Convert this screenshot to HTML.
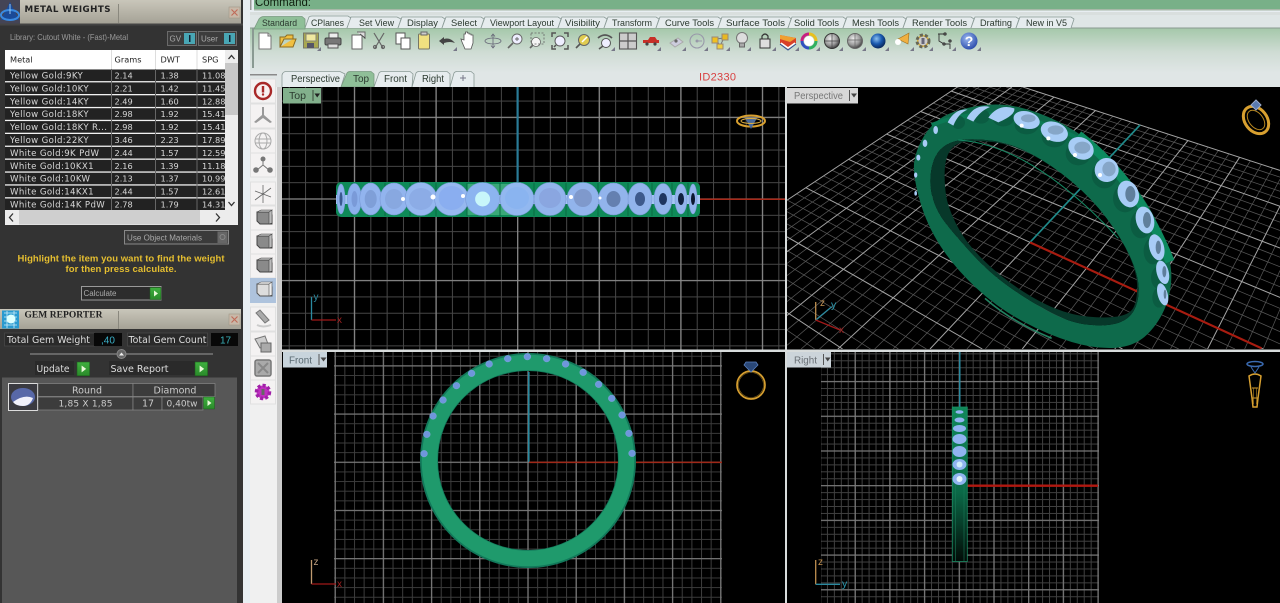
<!DOCTYPE html>
<html><head><meta charset="utf-8"><title>Metal Weights</title>
<style>
html,body{margin:0;padding:0;background:#333;width:1280px;height:603px;overflow:hidden}
svg{display:block;filter:blur(.35px)}
text{font-family:"Liberation Sans",sans-serif}
.d{font-family:"DejaVu Sans",sans-serif;font-size:8.2px;fill:#d8d8d8}
.n{font-family:"DejaVu Sans",sans-serif;font-size:8.6px;letter-spacing:.35px;fill:#d8d8d8}
.h{font-family:"DejaVu Sans",sans-serif;font-size:8.2px;fill:#222}
.t{font-size:9.6px;fill:#2c3a30}
.p{font-family:"DejaVu Sans",sans-serif;font-size:9px;fill:#ddd}
</style></head><body>
<svg width="1280" height="603" viewBox="0 0 1280 603" xmlns="http://www.w3.org/2000/svg">
<defs>
<linearGradient id="tb" x1="0" y1="0" x2="0" y2="1"><stop offset="0" stop-color="#a3c7a8"/><stop offset=".55" stop-color="#cfdcd4"/><stop offset="1" stop-color="#e0e6e6"/></linearGradient>
<linearGradient id="hd" x1="0" y1="0" x2="0" y2="1"><stop offset="0" stop-color="#c9c6ba"/><stop offset="1" stop-color="#a5a296"/></linearGradient>
<linearGradient id="gb" x1="0" y1="0" x2="0" y2="1"><stop offset="0" stop-color="#3fb03f"/><stop offset="1" stop-color="#2a8a2a"/></linearGradient>
<linearGradient id="rg" x1="0" y1="0" x2="0" y2="1"><stop offset="0" stop-color="#0f8a5a"/><stop offset=".55" stop-color="#0b6a48"/><stop offset="1" stop-color="#020a06"/></linearGradient>
<radialGradient id="sph" cx=".4" cy=".35" r=".7"><stop offset="0" stop-color="#eee"/><stop offset=".6" stop-color="#999"/><stop offset="1" stop-color="#333"/></radialGradient>
<radialGradient id="bsph" cx=".4" cy=".35" r=".7"><stop offset="0" stop-color="#8ac0f0"/><stop offset=".5" stop-color="#1a5ab0"/><stop offset="1" stop-color="#062050"/></radialGradient>
<radialGradient id="hlp" cx=".4" cy=".35" r=".7"><stop offset="0" stop-color="#9ab8f0"/><stop offset="1" stop-color="#2848a8"/></radialGradient>
<pattern id="tm" patternUnits="userSpaceOnUse" x="517.2" y="198.5" width="16.32" height="16.32"><path d="M.5 0V16.32M0 .5H16.32" stroke="#474747" fill="none"/></pattern>
<pattern id="tM" patternUnits="userSpaceOnUse" x="517" y="198.3" width="81.6" height="81.6"><path d="M.7 0V81.6M0 .7H81.6" stroke="#8c8c8c" stroke-width="1.2" fill="none"/></pattern>
<pattern id="fm" patternUnits="userSpaceOnUse" x="527.5" y="461.8" width="9.64" height="9.64"><path d="M.5 0V9.64M0 .5H9.64" stroke="#3c3c3c" fill="none"/></pattern>
<pattern id="fM" patternUnits="userSpaceOnUse" x="527.3" y="461.6" width="48.2" height="48.2"><path d="M.7 0V48.2M0 .7H48.2" stroke="#7c7c7c" stroke-width="1.2" fill="none"/></pattern>
<pattern id="rm" patternUnits="userSpaceOnUse" x="958.8" y="485.2" width="6.94" height="6.94"><path d="M.5 0V6.94M0 .5H6.94" stroke="#404040" fill="none"/></pattern>
<pattern id="rM" patternUnits="userSpaceOnUse" x="958.6" y="485" width="34.7" height="34.7"><path d="M.7 0V34.7M0 .7H34.7" stroke="#7c7c7c" stroke-width="1.2" fill="none"/></pattern>
<clipPath id="cpP"><rect x="787" y="87" width="493" height="262"/></clipPath>
<clipPath id="cpS"><rect x="0" y="60" width="225" height="155"/></clipPath>
<g id="ga"><rect x="0" y="0" width="11" height="12" fill="url(#gb)" stroke="#1c5c1c" stroke-width=".5"/><path d="M4 3L8 6L4 9Z" fill="#e8f8d8"/></g>
<g id="cb"><path d="M-6-6L6-6L9-3L9 6L-3 6L-6 3Z" fill="#8a8a8a" stroke="#444"/><path d="M-6-6L-2-8L9-8L6-6ZM6-6L9-8L9 5L6 6Z" fill="#bbb" stroke="#444" stroke-width=".6"/></g>
<path id="cor" d="M0 4L4 4L4 0Z" fill="#778"/>
</defs>

<!-- base right side -->
<rect x="243" y="0" width="1037" height="603" fill="#e8eef2"/>
<rect x="250" y="76" width="27" height="527" fill="#f0f0f0"/>
<rect x="277" y="76" width="5" height="527" fill="#ccc"/>

<!-- command bar -->
<rect x="254" y="0" width="1026" height="9" fill="#78b088"/>
<rect x="254" y="9" width="1026" height="1.5" fill="#a8b8a8"/>
<rect x="250" y="0" width="1.5" height="10" fill="#999"/>
<text x="255" y="6" font-size="11.5" fill="#10200f" textLength="56" lengthAdjust="spacingAndGlyphs">Command:</text>
<rect x="250" y="12" width="1030" height="3" fill="#d9dfde"/>

<!-- toolbar -->
<rect x="250" y="27" width="1030" height="46" fill="url(#tb)"/>
<rect x="250" y="73" width="1030" height="14" fill="#e0e6e6"/>
<rect x="252" y="15" width="2" height="53" fill="#8a9a92"/>
<rect x="250" y="15" width="1030" height="13" fill="#dfe6e6"/>
<rect x="250" y="27.5" width="1030" height="1" fill="#8a9a90"/>

<!-- tabs -->
<g fill="#e6ecee" stroke="#8a9a96" stroke-width=".8">
<path d="M305 28L309 17Q310 16 312 16H348L351 18L347 28"/>
<path d="M347 28L351 17H397L401 19L398 28"/>
<path d="M398 28L402 17H442L445 19L442 28"/>
<path d="M442 28L446 17H481L484 19L481 28"/>
<path d="M481 28L485 17H558L561 19L558 28"/>
<path d="M558 28L562 17H604L607 19L604 28"/>
<path d="M604 28L608 17H656L659 19L656 28"/>
<path d="M656 28L660 17H718L721 19L718 28"/>
<path d="M718 28L722 17H789L791 19L788 28"/>
<path d="M788 28L792 17H843L846 19L843 28"/>
<path d="M843 28L847 17H903L906 19L903 28"/>
<path d="M903 28L907 17H971L974 19L971 28"/>
<path d="M971 28L975 17H1016L1019 19L1016 28"/>
<path d="M1016 28L1020 17H1071L1074 19L1071 28"/>
</g>
<path d="M254 29L259 19Q261 16.5 264 16.5H302L305 19V29Z" fill="#8fbf98" stroke="#7a9a80" stroke-width=".8"/>
<text class="t" x="262" y="26" textLength="35" lengthAdjust="spacingAndGlyphs">Standard</text>
<text class="t" x="311" y="26" textLength="33" lengthAdjust="spacingAndGlyphs">CPlanes</text>
<text class="t" x="359" y="26" textLength="35" lengthAdjust="spacingAndGlyphs">Set View</text>
<text class="t" x="407" y="26" textLength="31" lengthAdjust="spacingAndGlyphs">Display</text>
<text class="t" x="451" y="26" textLength="26" lengthAdjust="spacingAndGlyphs">Select</text>
<text class="t" x="490" y="26" textLength="64" lengthAdjust="spacingAndGlyphs">Viewport Layout</text>
<text class="t" x="565" y="26" textLength="35" lengthAdjust="spacingAndGlyphs">Visibility</text>
<text class="t" x="612" y="26" textLength="40" lengthAdjust="spacingAndGlyphs">Transform</text>
<text class="t" x="665" y="26" textLength="49" lengthAdjust="spacingAndGlyphs">Curve Tools</text>
<text class="t" x="726" y="26" textLength="59" lengthAdjust="spacingAndGlyphs">Surface Tools</text>
<text class="t" x="794" y="26" textLength="45" lengthAdjust="spacingAndGlyphs">Solid Tools</text>
<text class="t" x="852" y="26" textLength="47" lengthAdjust="spacingAndGlyphs">Mesh Tools</text>
<text class="t" x="912" y="26" textLength="55" lengthAdjust="spacingAndGlyphs">Render Tools</text>
<text class="t" x="980" y="26" textLength="32" lengthAdjust="spacingAndGlyphs">Drafting</text>
<text class="t" x="1026" y="26" textLength="41" lengthAdjust="spacingAndGlyphs">New in V5</text>

<!-- toolbar icons -->
<g transform="translate(265,41)"><path d="M-6-8H3L6-5V8H-6Z" fill="#fff" stroke="#777"/><path d="M3-8V-5H6" fill="#ddd" stroke="#777"/></g>
<g transform="translate(288,41)"><path d="M-8 6V-4H-3L-1-6H5V-2H-4L-8 6H5L8-2H5" fill="#f0c040" stroke="#8a6a20"/></g>
<g transform="translate(311,41)"><rect x="-7.5" y="-8" width="15" height="15" fill="#a8a850" stroke="#776"/><rect x="-5" y="-7" width="10" height="7" fill="#f0e8a0" stroke="#887"/><rect x="-4" y="2" width="7" height="5" fill="#556"/><use href="#cor" x="6" y="6"/></g>
<g transform="translate(333,41)"><rect x="-4" y="-8" width="9" height="5" fill="#eee" stroke="#555"/><rect x="-8" y="-3" width="16" height="7" rx="1.5" fill="#777" stroke="#444"/><rect x="-5" y="3" width="10" height="4" fill="#ddd" stroke="#555"/></g>
<g transform="translate(358,41)"><path d="M-6-6H4V8H-6Z" fill="#fff" stroke="#666"/><path d="M-1-9H7V-2" fill="#ddd" stroke="#666"/><path d="M2-7L7-3" stroke="#444"/></g>
<g transform="translate(379,41)" stroke="#666" stroke-width="1.2" fill="none"><path d="M-5-8L4 7M5-8L-4 7"/><circle cx="-4" cy="6" r="1.5"/><circle cx="4" cy="6" r="1.5"/></g>
<g transform="translate(402,41)"><rect x="-6" y="-8" width="9" height="11" fill="#fff" stroke="#555"/><rect x="-1" y="-3" width="9" height="11" fill="#fff" stroke="#555"/></g>
<g transform="translate(424,41)"><rect x="-5.5" y="-7" width="11" height="15" rx="1" fill="#f0e080" stroke="#776"/><rect x="-3" y="-9" width="6" height="3" fill="#ccc" stroke="#666"/></g>
<g transform="translate(447,41)"><path d="M-8 0L-3-4V-2Q3-4 8 2Q3 0-3 2V4Z" fill="#444"/><use href="#cor" x="6" y="6"/></g>
<g transform="translate(468,41)"><path d="M-6 1L-7-2L-4-1V-7H-2.500V-9H-.5V-8H1V-7H3V-6H5V2L3 8H-3Z" fill="#fff" stroke="#555" stroke-width=".8"/></g>
<g transform="translate(493,41)" fill="none" stroke="#667" stroke-width=".8"><ellipse rx="8" ry="3"/><path d="M0-7V7M-2-4.500L0-7L2-4.500M-2 4.500L0 7L2 4.500"/></g>
<g transform="translate(515,41)" fill="none" stroke="#666" stroke-width=".9"><circle cx="2" cy="-2" r="5" fill="#eef"/><path d="M-2 2L-7 7" stroke-width="1.600"/><path d="M0-2H4M2-4V0"/></g>
<g transform="translate(537,41)" fill="none" stroke="#666" stroke-width=".8"><circle cx="-1" cy="1" r="4.500" fill="#f4f4f4"/><path d="M-4 4L-7 7" stroke-width="1.600"/><rect x="-6" y="-8" width="13" height="11" stroke-dasharray="2 1.500"/></g>
<g transform="translate(560,41)" fill="none" stroke="#555" stroke-width=".9"><circle r="5" fill="#eef"/><path d="M-4 4L-6 6" stroke-width="1.500"/><path d="M-8-4V-8H-4M4-8H8V-4M8 4V8H4M-4 8H-8V4" stroke-width="1.500"/></g>
<g transform="translate(583,41)"><circle cx="1" cy="-1" r="5.500" fill="#e0cc50" stroke="#666"/><path d="M-3 3L-7 7" stroke="#555" stroke-width="1.600"/><path d="M-1 1L4-4" stroke="#fff" stroke-width="1.500"/></g>
<g transform="translate(605,41)" fill="none" stroke="#555" stroke-width="1"><circle cx="1" cy="2" r="4.500" fill="#eef"/><path d="M-2 5L-6 8" stroke-width="1.600"/><path d="M-7-3Q0-9 7-3" stroke-width="1.800"/><use href="#cor" x="6" y="6" stroke="none"/></g>
<g transform="translate(628,41)"><rect x="-8.500" y="-8" width="17" height="16" fill="#ccc" stroke="#555" stroke-width="1.100"/><path d="M0-8V8M-8.500 0H8.500" stroke="#555" stroke-width="1.200"/></g>
<g transform="translate(651,41)"><path d="M-8 2V-1H-3L-1-4H4L6-1H8V2Z" fill="#c83028"/><circle cx="-4" cy="3" r="1.600" fill="#444"/><circle cx="4" cy="3" r="1.600" fill="#444"/><use href="#cor" x="6" y="6"/></g>
<g transform="translate(676,41)"><path d="M-6 2L2-3L7 1L-1 6Z" fill="#ccd" stroke="#aaa"/><circle r="1.600" fill="#666"/><use href="#cor" x="6" y="6"/></g>
<g transform="translate(697,41)" fill="none" stroke="#99a"><circle r="7" stroke-width="1.100"/><circle r="1" fill="#889"/><path d="M0 0H5"/><use href="#cor" x="7" y="6" stroke="none" fill="#778"/></g>
<g transform="translate(720,41)"><path d="M-4-2L4-3L0 5Z" fill="none" stroke="#777"/><rect x="-8" y="-4" width="6" height="6" fill="#f0c020" stroke="#987"/><rect x="2" y="-7" width="6" height="6" fill="#e8b820" stroke="#987"/><rect x="-3" y="3" width="6" height="5" fill="#f0d040" stroke="#987"/><use href="#cor" x="6" y="6"/></g>
<g transform="translate(742,41)"><circle cy="-3" r="5.500" fill="#ddd" stroke="#777"/><path d="M-2.500 2H2.500V6H-2.500Z" fill="#aaa" stroke="#666"/><use href="#cor" x="5" y="6"/></g>
<g transform="translate(765,41)"><rect x="-5" y="-2" width="10" height="9" fill="#ddd" stroke="#333"/><path d="M-3-2V-5Q0-9 3-5V-2" fill="none" stroke="#333" stroke-width="1.200"/><use href="#cor" x="7" y="6"/></g>
<g transform="translate(788,41)"><path d="M-8-6L8-3V2L0 8L-8 2Z" fill="#d84028"/><path d="M-8-6L8-3L2 1L-8-2Z" fill="#f0a030"/><path d="M-7 2L0 7L7 2" fill="none" stroke="#fff" stroke-width="1.500"/><path d="M-8 3L0 9L8 3" fill="none" stroke="#2a4a90"/><use href="#cor" x="7" y="6"/></g>
<g transform="translate(809,41)"><circle r="5" fill="#fff" stroke="none"/><path d="M0-7A7 7 0 0 1 7 0" stroke="#e8c020" stroke-width="3" fill="none"/><path d="M7 0A7 7 0 0 1 0 7" stroke="#30b060" stroke-width="3" fill="none"/><path d="M0 7A7 7 0 0 1-7 0" stroke="#3050c0" stroke-width="3" fill="none"/><path d="M-7 0A7 7 0 0 1 0-7" stroke="#c82080" stroke-width="3" fill="none"/><use href="#cor" x="7" y="6"/></g>
<g transform="translate(832,41)"><circle r="7.500" fill="url(#sph)" stroke="#333"/><path d="M0-7V7M-7 0H7" stroke="#444" stroke-width=".7"/><use href="#cor" x="7" y="6"/></g>
<g transform="translate(855,41)"><circle r="7.500" fill="url(#sph)" stroke="#666"/><path d="M0-7V7M-7-1H7" stroke="#666" stroke-width=".7"/><use href="#cor" x="7" y="6"/></g>
<g transform="translate(878,41)"><circle r="7.500" fill="url(#bsph)"/><use href="#cor" x="7" y="6"/></g>
<g transform="translate(903,41)"><path d="M-5-2L6-8L5 3Z" fill="#f0b040" stroke="#a07020" stroke-width=".6"/><circle cx="-5" cy="1" r="3" fill="#fff"/><use href="#cor" x="7" y="6"/></g>
<g transform="translate(923,41)"><circle r="6" fill="#d8b040" stroke="#665" stroke-width="3" stroke-dasharray="3 2"/><circle r="4.500" fill="#ccc"/><rect x="-1.500" y="-3" width="3" height="6" fill="#667"/><use href="#cor" x="6" y="6"/></g>
<g transform="translate(946,41)" fill="none" stroke="#333" stroke-width=".9"><path d="M-8-7H-1M-7-7V0L-2 3H4V8"/><circle cx="-1" cy="-7" r="1.200" fill="#666"/><circle cx="-2" cy="3" r="1.200" fill="#666"/><circle cx="4" cy="0" r="1.200" fill="#666"/><use href="#cor" x="6" y="6" stroke="none"/></g>
<g transform="translate(969,41)"><circle r="8.500" fill="url(#hlp)"/><text x="0" y="5" text-anchor="middle" font-size="14" font-weight="bold" style="fill:#fff">?</text><use href="#cor" x="8" y="6"/></g>

<!-- viewport tabs -->
<g stroke="#8a9a96" stroke-width=".8" fill="#e6ecee">
<path d="M282 87V75Q283 71.500 286 71.500H340L345 74L341 87"/>
<path d="M374 87L379 73Q380 71.500 382 71.500H410L413 74L412 87"/>
<path d="M412 87L416 73Q417 71.500 419 71.500H447L450 74V87"/>
<path d="M450 87L454 73Q455 71.500 457 71.500H471L474 74V87"/>
</g>
<path d="M341 87L347 73Q348 71.500 350 71.500H371L374 74V87Z" fill="#8fbf98" stroke="#7a9a80" stroke-width=".8"/>
<text class="t" x="291" y="82" textLength="49" lengthAdjust="spacingAndGlyphs" style="font-size:10.5px">Perspective</text>
<text class="t" x="353" y="82" textLength="16" lengthAdjust="spacingAndGlyphs" style="font-size:10.5px">Top</text>
<text class="t" x="384" y="82" textLength="23" lengthAdjust="spacingAndGlyphs" style="font-size:10.5px">Front</text>
<text class="t" x="422" y="82" textLength="22" lengthAdjust="spacingAndGlyphs" style="font-size:10.5px">Right</text>
<path d="M463 75V81M460 78H466" stroke="#778" stroke-width="1"/>
<text x="699" y="80.500" font-size="11" fill="#d84040" textLength="37">ID2330</text>

<!-- left icon bar -->
<rect x="250" y="74" width="27" height="1.500" fill="#8a8a8a"/>
<g fill="#f4f2f2" stroke="#e0e0e0">
<rect x="250.500" y="79" width="25" height="24"/><rect x="250.500" y="104" width="25" height="24"/><rect x="250.500" y="129" width="25" height="24"/><rect x="250.500" y="153" width="25" height="24"/>
<rect x="250.500" y="182" width="25" height="23"/><rect x="250.500" y="206" width="25" height="24"/><rect x="250.500" y="230" width="25" height="24"/><rect x="250.500" y="254" width="25" height="24"/>
<rect x="250.500" y="307" width="25" height="24"/><rect x="250.500" y="332" width="25" height="24"/><rect x="250.500" y="356" width="25" height="24"/><rect x="250.500" y="380" width="25" height="24"/>
</g>
<rect x="250" y="278" width="26" height="25" fill="#aec3dd"/>
<g transform="translate(263,91)"><circle r="8" fill="#f8f0f0" stroke="#a82828" stroke-width="2.400"/><rect x="-1.200" y="-5" width="2.400" height="6.500" fill="#a82828"/><circle cy="3.500" r="1.200" fill="#a82828"/></g>
<g transform="translate(263,116)" fill="#999"><path d="M-1-9H1V-1L9 6L7 7L0 2L-7 7L-9 6L-1-1Z"/></g>
<g transform="translate(263,141)" fill="none" stroke="#aaa" stroke-width="1"><circle r="8"/><ellipse rx="4" ry="8"/><path d="M-8-2H8M-8 2H8"/></g>
<g transform="translate(263,165)" fill="#777"><circle cy="-6" r="2.500"/><circle cx="-7" cy="5" r="2.800"/><circle cx="7" cy="5" r="2.800"/><path d="M0-5V0L-6 5M0 0L6 5" stroke="#777" stroke-width="1" fill="none"/></g>
<g transform="translate(263,194)" stroke="#666" fill="none"><path d="M-8 6L8-6M0-9V9M-8-3L8 3" stroke-width=".8"/></g>
<use href="#cb" transform="translate(263,218)"/>
<use href="#cb" transform="translate(263,242)"/>
<use href="#cb" transform="translate(263,266)"/>
<g transform="translate(263,290)"><path d="M-6-6L6-6L9-3L9 6L-3 6L-6 3Z" fill="#ddd" stroke="#555"/><path d="M-6-6L-2-8L9-8L6-6ZM6-6L9-8L9 5L6 6Z" fill="#eee" stroke="#555" stroke-width=".6"/></g>
<g transform="translate(263,319)"><path d="M-7-6L-3-9L6 1L2 4Z" fill="#aaa" stroke="#777"/><path d="M-6 6Q0 9 8 6" stroke="#ccc" stroke-width="2" fill="none"/></g>
<g transform="translate(263,344)"><path d="M-8-5L2-8L5 0L-3 4Z" fill="#ccc" stroke="#777"/><rect x="-2" y="-1" width="10" height="9" fill="#aaa" stroke="#666"/></g>
<g transform="translate(263,368)"><rect x="-8" y="-8" width="16" height="16" rx="2" fill="#aaa" stroke="#777" stroke-width="1.500"/><path d="M-5-5L5 5M5-5L-5 5" stroke="#888" stroke-width="2"/></g>
<g transform="translate(263,392)"><circle r="6.500" fill="#c030c0" stroke="#a020a8" stroke-width="3.500" stroke-dasharray="3 2"/><rect x="-1.500" y="-3" width="3" height="6" fill="#666"/></g>

<!-- viewports -->
<rect x="282" y="87" width="998" height="516" fill="#000"/>
<rect x="785" y="87" width="2" height="516" fill="#d8dcdc"/>
<rect x="282" y="349.500" width="998" height="2.500" fill="#d8dcdc"/>

<!-- TOP -->
<rect x="282" y="87" width="503" height="262.500" fill="url(#tm)"/>
<rect x="282" y="87" width="503" height="262.500" fill="url(#tM)"/>
<rect x="516.500" y="87" width="2.200" height="96" fill="#2a7c98"/>
<rect x="700" y="198.500" width="85" height="1.500" fill="#a82818"/>
<rect x="336" y="182" width="364" height="35" rx="5" fill="#0e8a58"/>
<rect x="467" y="184" width="44" height="31" fill="#3aa878"/>
<g stroke="#0a6a42" stroke-width="1"><path d="M352 183V216M368 183V216M385 183V216M410 183V216M436 183V216M467 183V216M500 183V216M534 183V216M566 183V216M598 183V216M628 183V216M652 183V216M672 183V216M688 183V216"/></g>
<rect x="336" y="195" width="364" height="9" fill="#a4c6f4"/>
<g stroke="#7a9ad6" stroke-width=".6">
<ellipse cx="341" cy="199" rx="4" ry="15" fill="#8cb0ec"/><ellipse cx="341" cy="199" rx="1.500" ry="7" fill="#3a5a90" stroke="none"/>
<ellipse cx="354.500" cy="199" rx="7" ry="15.500" fill="#8cb0ec"/><ellipse cx="354.500" cy="199" rx="3" ry="8" fill="#7a9ad8" stroke="none"/>
<ellipse cx="370.700" cy="199" rx="11" ry="16" fill="#92b4ee"/><ellipse cx="370.700" cy="199" rx="6" ry="9" fill="#7f9fd8" stroke="none"/>
<ellipse cx="394" cy="199" rx="14" ry="16" fill="#92b4ee"/><ellipse cx="394" cy="199" rx="9" ry="10" fill="#88a8e0" stroke="none"/>
<ellipse cx="421" cy="199" rx="16" ry="16.500" fill="#96b8f0"/><ellipse cx="421" cy="199" rx="12" ry="11" fill="#8cace6" stroke="none"/>
<ellipse cx="451.600" cy="199" rx="17" ry="16.500" fill="#96b8f0"/><ellipse cx="451.600" cy="198" rx="13" ry="12" fill="#8aaef0" stroke="none"/>
<ellipse cx="482.600" cy="199" rx="17" ry="16.500" fill="#8cb4f0"/><ellipse cx="482.600" cy="199" rx="7.500" ry="7.500" fill="#c8f6fa" stroke="none"/>
<ellipse cx="517" cy="199" rx="17" ry="16.500" fill="#92b8f0"/><ellipse cx="517" cy="198" rx="12" ry="11" fill="#8ab4f0" stroke="none"/>
<ellipse cx="550" cy="199" rx="16" ry="16.500" fill="#92b4ec"/><ellipse cx="550" cy="198" rx="11" ry="10" fill="#8aa6e0" stroke="none"/>
<ellipse cx="583" cy="199" rx="16" ry="16.500" fill="#92b4ec"/><ellipse cx="583" cy="198" rx="9" ry="9" fill="#7f99cc" stroke="none"/>
<ellipse cx="613.500" cy="199" rx="15" ry="16" fill="#92b4ec"/><ellipse cx="613.500" cy="199" rx="7" ry="8" fill="#6480b0" stroke="none"/>
<ellipse cx="640" cy="199" rx="12" ry="16" fill="#92b4ec"/><ellipse cx="640" cy="199" rx="5" ry="7" fill="#3e5a8c" stroke="none"/>
<ellipse cx="663" cy="199" rx="9" ry="15.500" fill="#92b4ec"/><ellipse cx="663" cy="199" rx="4" ry="6" fill="#1f3560" stroke="none"/>
<ellipse cx="681" cy="199" rx="6" ry="15" fill="#92b4ec"/><ellipse cx="681" cy="199" rx="3" ry="6" fill="#102040" stroke="none"/>
<ellipse cx="693" cy="199" rx="4" ry="15" fill="#92b4ec"/><ellipse cx="693" cy="199" rx="2" ry="6" fill="#0c1830" stroke="none"/>
</g>
<g fill="#fff"><circle cx="403" cy="199" r="2"/><circle cx="433" cy="197" r="2.500"/><circle cx="463" cy="196" r="2"/><circle cx="571" cy="197" r="2"/><circle cx="600" cy="198" r="1.500"/></g>
<rect x="283" y="88" width="38" height="15.500" fill="#82b08c"/>
<rect x="312.500" y="90" width="1" height="11" fill="#3a4a3a"/><path d="M314.500 93.500H320L317.200 97.500Z" fill="#222"/>
<text x="289" y="99" font-size="10.500" fill="#2a3a2e" textLength="17" lengthAdjust="spacingAndGlyphs">Top</text>
<g fill="none" stroke-width="1.300"><path d="M311.500 320V297" stroke="#2a8aa0"/><path d="M311.500 320H336" stroke="#a01818"/></g>
<text x="313.500" y="300" font-size="10" fill="#2a8aa0">y</text><text x="337" y="323" font-size="10" fill="#a02020">x</text>
<g transform="translate(751,121)"><ellipse rx="14" ry="5.500" fill="none" stroke="#d8a030" stroke-width="2"/><path d="M-6-3H6L0 8Z" fill="#4a6a9a"/><ellipse rx="10" ry="2.500" fill="none" stroke="#e0b040"/></g>

<!-- PERSPECTIVE -->
<g clip-path="url(#cpP)"><g transform="translate(785,85) scale(.33333)">
<g id="pg"></g>
<path d="M735 472L1065 120" stroke="#1f8a8a" stroke-width="5"/>
<path d="M735 472L1430 790" stroke="#a81c10" stroke-width="6.500"/>
<path id="rOuter" fill="#0e6a4b" fill-rule="evenodd"/>
<path id="rWall" fill="#07382a" fill-rule="evenodd"/>
<path d="M600 640Q680 710 800 760" stroke="#2aa078" stroke-width="5" fill="none" opacity=".8"/>
<path d="M440 120Q640 40 880 160" stroke="#0b7a55" stroke-width="12" fill="none"/>
<path d="M880 150Q1060 290 1155 530" stroke="#0d8a5f" stroke-width="28" fill="none"/>
<path d="M520 165Q740 180 1000 460" stroke="#158a64" stroke-width="3" fill="none"/>
<g fill="#0b5c42"><ellipse cx="520" cy="112" rx="20" ry="20"/><ellipse cx="588" cy="94" rx="26" ry="22"/><ellipse cx="655" cy="100" rx="32" ry="24"/><ellipse cx="725" cy="120" rx="36" ry="28"/><ellipse cx="808" cy="155" rx="38" ry="32"/><ellipse cx="880" cy="205" rx="38" ry="36"/><ellipse cx="958" cy="270" rx="38" ry="40"/><ellipse cx="1020" cy="340" rx="36" ry="42"/><ellipse cx="1068" cy="418" rx="32" ry="42"/><ellipse cx="1103" cy="498" rx="27" ry="40"/><ellipse cx="1122" cy="578" rx="24" ry="34"/><ellipse cx="1122" cy="638" rx="20" ry="30"/></g>
<g fill="#a8ccf6">
<ellipse cx="392" cy="325" rx="4" ry="7"/><ellipse cx="392" cy="270" rx="5" ry="8"/><ellipse cx="400" cy="218" rx="6" ry="9"/><ellipse cx="420" cy="175" rx="7" ry="11"/><ellipse cx="452" cy="135" rx="7" ry="12"/>
<path d="M488 112Q510 70 548 74Q520 85 505 122Z"/><path d="M545 100Q570 55 615 66Q585 78 565 110Z"/><path d="M610 98Q640 55 688 70Q692 90 640 112Z"/>
<ellipse cx="725" cy="105" rx="40" ry="26" transform="rotate(15 725 105)"/><ellipse cx="808" cy="140" rx="42" ry="29" transform="rotate(20 808 140)"/><ellipse cx="888" cy="190" rx="40" ry="32" transform="rotate(30 888 190)"/><ellipse cx="965" cy="255" rx="36" ry="36" transform="rotate(40 965 255)"/><ellipse cx="1030" cy="327" rx="31" ry="41" transform="rotate(-20 1030 327)"/><ellipse cx="1080" cy="405" rx="27" ry="41" transform="rotate(-15 1080 405)"/><ellipse cx="1115" cy="487" rx="22" ry="40" transform="rotate(-15 1115 487)"/><ellipse cx="1133" cy="562" rx="18" ry="36" transform="rotate(-15 1133 562)"/><ellipse cx="1133" cy="628" rx="15" ry="34" transform="rotate(-15 1133 628)"/>
</g>
<g fill="#86a6c8"><ellipse cx="730" cy="100" rx="22" ry="12"/><ellipse cx="812" cy="135" rx="24" ry="14"/><ellipse cx="892" cy="188" rx="24" ry="18"/><ellipse cx="972" cy="252" rx="20" ry="22"/></g>
<g fill="#607f9c"><ellipse cx="1036" cy="327" rx="15" ry="24"/><ellipse cx="1086" cy="405" rx="12" ry="24"/><ellipse cx="1120" cy="487" rx="8" ry="20"/><ellipse cx="1138" cy="560" rx="6" ry="17"/><ellipse cx="1140" cy="628" rx="4" ry="14"/></g>
<g fill="#fff"><circle cx="710" cy="122" r="6"/><circle cx="790" cy="160" r="6"/><circle cx="870" cy="210" r="6"/><circle cx="945" cy="270" r="6"/></g>
</g></g>
<rect x="787" y="88" width="71" height="15.500" fill="#d8d8d8"/>
<rect x="849" y="90" width="1" height="11" fill="#555"/><path d="M851 93.500H857L854 97.500Z" fill="#444"/>
<text x="794" y="99" font-size="10.500" fill="#777" textLength="49" lengthAdjust="spacingAndGlyphs">Perspective</text>
<g fill="none" stroke-width="1.300"><path d="M815.700 320V302" stroke="#c09050"/><path d="M815.700 320L831.700 306.700" stroke="#2a8aa0"/><path d="M815.700 320L840 330" stroke="#a01818"/></g>
<text x="820" y="306" font-size="10" fill="#c09050">z</text><text x="831" y="308" font-size="10.500" fill="#2a9ab0">y</text><text x="839" y="333" font-size="10" fill="#a02020">x</text>
<g transform="translate(1256,120)"><ellipse rx="15" ry="11" transform="rotate(52)" fill="none" stroke="#d8a030" stroke-width="3"/><ellipse rx="11" ry="7" transform="rotate(52)" fill="none" stroke="#b88820"/><path d="M-5-15L0-20L5-15L0-10Z" fill="#5a7ab0" stroke="#9ac"/></g>

<!-- FRONT -->
<rect x="334" y="352" width="388" height="251" fill="url(#fm)"/>
<rect x="334" y="352" width="388" height="251" fill="url(#fM)"/>
<rect x="528" y="372" width="1.600" height="90" fill="#2a8aa0"/>
<rect x="529" y="461.600" width="193" height="1.500" fill="#a02818"/>
<ellipse cx="528" cy="460.500" rx="99" ry="98.500" fill="none" stroke="#12785a" stroke-width="18"/>
<ellipse cx="528" cy="460.500" rx="98.500" ry="98" fill="none" stroke="#1f9a6c" stroke-width="15.500"/>
<g transform="translate(245,345) scale(.34436,.33333)"><g fill="#6f96dc" stroke="#8eaee8" stroke-width="1">
<circle cx="520" cy="326" r="10"/><circle cx="528" cy="268" r="10"/><circle cx="546" cy="213" r="10"/><circle cx="575" cy="165" r="10"/><circle cx="614" cy="122" r="10"/><circle cx="658" cy="85" r="10"/><circle cx="709" cy="57" r="10"/><circle cx="763" cy="41" r="10"/><circle cx="820" cy="35" r="10"/><circle cx="876" cy="41" r="10"/><circle cx="931" cy="57" r="10"/><circle cx="982" cy="82" r="10"/><circle cx="1027" cy="118" r="10"/><circle cx="1065" cy="160" r="10"/><circle cx="1095" cy="210" r="10"/><circle cx="1115" cy="265" r="10"/><circle cx="1124" cy="325" r="10"/></g></g>
<rect x="283" y="352" width="44" height="15.500" fill="#c8d4dc"/>
<rect x="318.500" y="354" width="1" height="11" fill="#555"/><path d="M320.500 357.500H326.500L323.500 361.500Z" fill="#444"/>
<text x="289" y="363.500" font-size="10.500" fill="#5a6a72" textLength="23" lengthAdjust="spacingAndGlyphs">Front</text>
<g fill="none" stroke-width="1.300"><path d="M311.500 584V560" stroke="#c09a70"/><path d="M311.500 584H336" stroke="#a01818"/></g>
<text x="313.500" y="565" font-size="10" fill="#c0a080">z</text><text x="337" y="587" font-size="10" fill="#a02020">x</text>
<g transform="translate(751,385)"><circle r="14" fill="none" stroke="#d8a030" stroke-width="1.700"/><circle r="12.500" fill="none" stroke="#8a6a20" stroke-width=".6"/><path d="M-5-23H5L7-20L0-13L-7-20Z" fill="#2a4878" stroke="#5a80c0" stroke-width=".8"/></g>

<!-- RIGHT -->
<rect x="821" y="352" width="278" height="251" fill="url(#rm)"/>
<rect x="821" y="352" width="278" height="251" fill="url(#rM)"/>
<rect x="959" y="352" width="1.500" height="56" fill="#2a8aa0"/>
<rect x="967" y="484.500" width="131" height="2.400" fill="#b01810"/>
<rect x="952.300" y="407" width="15" height="154.500" fill="url(#rg)" stroke="#1a8a62" stroke-width=".8"/>
<path d="M955.500 408V561M964 408V561" stroke="#1a7a58" stroke-width=".6"/>
<g fill="#90b4f0"><ellipse cx="959.500" cy="412" rx="4" ry="1.800"/><ellipse cx="959.500" cy="420" rx="5" ry="2.500"/><ellipse cx="959.500" cy="428.500" rx="6.500" ry="3.500"/><ellipse cx="959.500" cy="439" rx="7" ry="5"/><ellipse cx="959.500" cy="451.500" rx="7" ry="5.500"/><ellipse cx="959.500" cy="464.500" rx="7" ry="5.500"/><ellipse cx="959.500" cy="479" rx="7" ry="6"/></g>
<circle cx="959.500" cy="464.500" r="3" fill="#d0ecfa"/><circle cx="959.500" cy="479" r="3" fill="#e4f4fa"/>
<rect x="787" y="352" width="44" height="15.500" fill="#ccd4da"/>
<rect x="823" y="354" width="1" height="11" fill="#555"/><path d="M825 357.500H830.500L827.700 361.500Z" fill="#444"/>
<text x="794" y="363.500" font-size="10.500" fill="#6a7076" textLength="23" lengthAdjust="spacingAndGlyphs">Right</text>
<g fill="none" stroke-width="1.300"><path d="M815.700 584.300V560" stroke="#c09050"/><path d="M815.700 584.300H840" stroke="#2a8aa0"/></g>
<text x="818" y="565" font-size="10" fill="#c09050">z</text><text x="842" y="587" font-size="10.500" fill="#2a9ab0">y</text>
<g transform="translate(1255,390)" fill="none"><path d="M-6-14Q0-18 6-14L3 8L2 17H-2L-3 8Z" stroke="#d8a030" stroke-width="1.500"/><path d="M-3-2H3M-3 8H3" stroke="#d8a030"/><path d="M-1.500-2V14M1.500-2V14" stroke="#b88820" stroke-width=".6"/><ellipse cy="-26" rx="8" ry="2.500" stroke="#3a6ab0" stroke-width="1.500"/><path d="M-4-23L0-17L4-23" stroke="#3a6ab0"/></g>

<!-- LEFT PANEL -->
<rect x="0" y="0" width="243" height="603" fill="#333"/>
<rect x="0" y="0" width="241" height="23.500" fill="url(#hd)"/>
<rect x="0" y="23.500" width="243" height="2" fill="#444"/>
<rect x="118" y="4" width="1" height="19" fill="#8a887e"/>
<rect x="0" y="0" width="20" height="23.500" fill="#445"/>
<path d="M1 20L10 2L19 20Z" fill="#1a4a98"/><ellipse cx="10" cy="15" rx="9" ry="5" fill="none" stroke="#3a8ae0" stroke-width="2"/><path d="M10 4V14" stroke="#9ac8f0"/>
<text x="24.500" y="12" style="font-family:'DejaVu Sans',sans-serif" font-size="8.700" font-weight="bold" fill="#222" textLength="86">METAL WEIGHTS</text>
<rect x="229" y="7" width="11" height="11" fill="#c8b8a8" stroke="#a09888" stroke-width=".6"/><path d="M231.500 9.500L237.500 15.500M237.500 9.500L231.500 15.500" stroke="#c06a58" stroke-width="1.100"/>
<text x="10" y="40" font-size="8.300" fill="#9a9a9a" textLength="118" lengthAdjust="spacingAndGlyphs">Library: Cutout White - (Fast)-Metal</text>
<rect x="167.500" y="31.500" width="29" height="14" fill="#3c3c3c" stroke="#777" stroke-width=".8"/><text x="169.500" y="41.500" font-size="8" fill="#aaa">GV</text>
<rect x="184" y="33" width="11" height="11" fill="#49a6b4"/><rect x="189" y="35" width="1.500" height="7" fill="#123"/>
<rect x="198.500" y="31.500" width="38" height="14" fill="#3c3c3c" stroke="#777" stroke-width=".8"/><text x="201" y="41.500" font-size="8" fill="#aaa">User</text>
<rect x="224" y="33" width="11" height="11" fill="#49a6b4"/><rect x="229" y="35" width="1.500" height="7" fill="#123"/>

<!-- table -->
<rect x="5" y="50" width="233" height="175" fill="#f2f2f2"/>
<rect x="5" y="50" width="220" height="19" fill="#fff"/>
<text class="h" x="10" y="62.500">Metal</text><text class="h" x="114.500" y="62.500">Grams</text><text class="h" x="160.500" y="62.500">DWT</text><text class="h" x="202" y="62.500">SPG</text>
<path d="M111.500 50V69M155.500 50V69M197 50V69" stroke="#ddd"/>
<g fill="#222">
<rect x="5" y="69.500" width="220" height="11.600"/><rect x="5" y="82.400" width="220" height="11.600"/><rect x="5" y="95.300" width="220" height="11.600"/><rect x="5" y="108.200" width="220" height="11.600"/><rect x="5" y="121.100" width="220" height="11.600"/><rect x="5" y="134" width="220" height="11.600"/><rect x="5" y="146.900" width="220" height="11.600"/><rect x="5" y="159.800" width="220" height="11.600"/><rect x="5" y="172.700" width="220" height="11.600"/><rect x="5" y="185.600" width="220" height="11.600"/><rect x="5" y="198.500" width="220" height="11.600"/>
</g>
<path d="M111.500 69V210M155.500 69V210M197 69V210" stroke="#666"/>
<g clip-path="url(#cpS)">
<text class="n" x="10" y="78.500">Yellow Gold:9KY</text><text class="d" x="114.500" y="78.500">2.14</text><text class="d" x="160.500" y="78.500">1.38</text><text class="d" x="202" y="78.500">11.08</text>
<text class="n" x="10" y="91.400">Yellow Gold:10KY</text><text class="d" x="114.500" y="91.400">2.21</text><text class="d" x="160.500" y="91.400">1.42</text><text class="d" x="202" y="91.400">11.45</text>
<text class="n" x="10" y="104.300">Yellow Gold:14KY</text><text class="d" x="114.500" y="104.300">2.49</text><text class="d" x="160.500" y="104.300">1.60</text><text class="d" x="202" y="104.300">12.88</text>
<text class="n" x="10" y="117.200">Yellow Gold:18KY</text><text class="d" x="114.500" y="117.200">2.98</text><text class="d" x="160.500" y="117.200">1.92</text><text class="d" x="202" y="117.200">15.41</text>
<text class="n" x="10" y="130.100">Yellow Gold:18KY R...</text><text class="d" x="114.500" y="130.100">2.98</text><text class="d" x="160.500" y="130.100">1.92</text><text class="d" x="202" y="130.100">15.41</text>
<text class="n" x="10" y="143">Yellow Gold:22KY</text><text class="d" x="114.500" y="143">3.46</text><text class="d" x="160.500" y="143">2.23</text><text class="d" x="202" y="143">17.89</text>
<text class="n" x="10" y="155.900">White Gold:9K PdW</text><text class="d" x="114.500" y="155.900">2.44</text><text class="d" x="160.500" y="155.900">1.57</text><text class="d" x="202" y="155.900">12.59</text>
<text class="n" x="10" y="168.800">White Gold:10KX1</text><text class="d" x="114.500" y="168.800">2.16</text><text class="d" x="160.500" y="168.800">1.39</text><text class="d" x="202" y="168.800">11.18</text>
<text class="n" x="10" y="181.700">White Gold:10KW</text><text class="d" x="114.500" y="181.700">2.13</text><text class="d" x="160.500" y="181.700">1.37</text><text class="d" x="202" y="181.700">10.99</text>
<text class="n" x="10" y="194.600">White Gold:14KX1</text><text class="d" x="114.500" y="194.600">2.44</text><text class="d" x="160.500" y="194.600">1.57</text><text class="d" x="202" y="194.600">12.61</text>
<text class="n" x="10" y="207.500">White Gold:14K PdW</text><text class="d" x="114.500" y="207.500">2.78</text><text class="d" x="160.500" y="207.500">1.79</text><text class="d" x="202" y="207.500">14.31</text>
</g>
<rect x="225" y="50" width="13" height="160" fill="#ededed"/>
<rect x="225" y="63" width="13" height="52" fill="#c8c8c8"/>
<path d="M228.500 59L231.500 55.500L234.500 59M228.500 202L231.500 205.500L234.500 202" fill="none" stroke="#333" stroke-width="1.300"/>
<rect x="5" y="210" width="233" height="14.500" fill="#ececec"/>
<rect x="19" y="210" width="181" height="14.500" fill="#cfcfcf"/>
<path d="M13 213.500L9.500 217.500L13 221.500M216 213.500L219.500 217.500L216 221.500" fill="none" stroke="#333" stroke-width="1.300"/>

<rect x="124.500" y="230.500" width="104" height="13.500" fill="#3a3a3a" stroke="#888"/>
<text x="127" y="240.500" font-size="8" fill="#aaa" textLength="75">Use Object Materials</text>
<rect x="217.500" y="231.500" width="10" height="11.500" fill="#666"/><circle cx="222.500" cy="237" r="2.500" fill="none" stroke="#888"/>
<text x="121" y="261.500" text-anchor="middle" font-size="9.500" font-weight="bold" fill="#e6bf30" textLength="207">Highlight the item you want to find the weight</text>
<text x="121" y="272" text-anchor="middle" font-size="9.500" font-weight="bold" fill="#e6bf30" textLength="111">for then press calculate.</text>
<rect x="81.500" y="286.500" width="79.500" height="13.500" fill="#2c2c2c" stroke="#999"/>
<text x="83.500" y="296" font-size="8" fill="#aaa" textLength="33">Calculate</text>
<use href="#ga" x="150" y="287.500"/>

<!-- gem reporter -->
<rect x="0" y="309" width="241" height="20" fill="url(#hd)"/>
<rect x="118" y="311" width="1" height="18" fill="#8a887e"/>
<rect x="2" y="310.500" width="17" height="18" fill="#2a9ad0"/>
<path d="M4 313H17M4 317H17M4 321H17M4 325H17M7 311V328M14 311V328" stroke="#cfeefa" stroke-width=".8"/>
<circle cx="11" cy="319" r="4.500" fill="#dff"/>
<text x="24.500" y="317.500" style="font-family:'Liberation Serif',serif" font-size="9.500" font-weight="bold" fill="#222" textLength="78">GEM REPORTER</text>
<rect x="229" y="314" width="11" height="11" fill="#c8b8a8" stroke="#a09888" stroke-width=".6"/><path d="M231.500 316.500L237.500 322.500M237.500 316.500L231.500 322.500" stroke="#c06a58" stroke-width="1.100"/>

<rect x="4.500" y="333" width="90" height="13" fill="#2a2a2a" stroke="#4a4a4a" stroke-width=".7"/>
<text class="p" x="7" y="343" textLength="83" lengthAdjust="spacingAndGlyphs" style="font-size:9.500px">Total Gem Weight</text>
<rect x="94" y="333" width="28" height="13" fill="#080808"/><text x="101" y="343.500" font-size="10" fill="#3ab0c8">,40</text>
<rect x="127.500" y="333" width="80" height="13" fill="#2a2a2a" stroke="#4a4a4a" stroke-width=".7"/>
<text class="p" x="128.500" y="343" textLength="78" lengthAdjust="spacingAndGlyphs" style="font-size:9.500px">Total Gem Count</text>
<rect x="211" y="333" width="27" height="13" fill="#080808"/><text x="220" y="343.500" font-size="10" fill="#3ab0b8">17</text>
<rect x="30" y="353.500" width="183" height="1" fill="#999"/>
<circle cx="121.500" cy="354" r="4.500" fill="#666" stroke="#888"/><path d="M119 355.500L121.500 352.500L124 355.500Z" fill="#eee"/>
<rect x="35" y="361" width="39" height="14" fill="#2a2a2a"/><text class="p" x="36.500" y="372" textLength="33" lengthAdjust="spacingAndGlyphs" style="font-size:9.500px">Update</text>
<use href="#ga" transform="translate(77,362) scale(1.150)"/>
<rect x="109" y="361" width="86" height="14" fill="#2a2a2a"/><text class="p" x="110.500" y="372" textLength="58" lengthAdjust="spacingAndGlyphs" style="font-size:9.500px">Save Report</text>
<use href="#ga" transform="translate(195,362) scale(1.150)"/>

<rect x="2" y="377.500" width="235" height="225.500" fill="#575757"/>
<rect x="8.500" y="383.500" width="29" height="27" fill="#3a3a40" stroke="#ddd"/>
<ellipse cx="23" cy="397" rx="12" ry="9" fill="#5868a8"/><path d="M13 402Q24 394 33 398Q30 406 23 406Q16 406 13 402Z" fill="#f0f0fa"/>
<rect x="38" y="383.500" width="95" height="13" fill="#3c3c3c" stroke="#888" stroke-width=".7"/>
<rect x="133" y="383.500" width="82" height="13" fill="#3c3c3c" stroke="#888" stroke-width=".7"/>
<rect x="38" y="397" width="95" height="13" fill="#3c3c3c" stroke="#888" stroke-width=".7"/>
<rect x="133" y="397" width="29" height="13" fill="#3c3c3c" stroke="#888" stroke-width=".7"/>
<rect x="162" y="397" width="41" height="13" fill="#3c3c3c" stroke="#888" stroke-width=".7"/>
<text x="87" y="393.500" text-anchor="middle" class="p" style="font-size:9.500px;fill:#ccc">Round</text>
<text x="175" y="393.500" text-anchor="middle" class="p" style="font-size:9.500px;fill:#ccc">Diamond</text>
<text x="85.500" y="406.500" text-anchor="middle" class="p" style="font-size:9px;fill:#ccc" textLength="54">1,85 X 1,85</text>
<text x="148" y="406.500" text-anchor="middle" class="p" style="font-size:9.500px;fill:#ccc">17</text>
<text x="182" y="406.500" text-anchor="middle" class="p" style="font-size:9px;fill:#ccc" textLength="31">0,40tw</text>
<use href="#ga" x="203.500" y="397"/>
</svg>
<script>
(function(){
var NS="http://www.w3.org/2000/svg",VX=[-2714,-1106],VY=[2250,-1144],O=[735,472],a=-0.00937,b=0.013925;
function H(u,v){var w1=a*u,w2=b*v,d=w1+w2+1;return[(w1*VX[0]+w2*VY[0]+O[0])/d,(w1*VX[1]+w2*VY[1]+O[1])/d];}
var g=document.getElementById("pg");
var bx0=6,bx1=1485,by0=6,by1=792;
function clip(p,q){var t0=0,t1=1,dx=q[0]-p[0],dy=q[1]-p[1],P=[-dx,dx,-dy,dy],Q=[p[0]-bx0,bx1-p[0],p[1]-by0,by1-p[1]];
for(var i=0;i<4;i++){if(P[i]===0){if(Q[i]<0)return null;}else{var r=Q[i]/P[i];if(P[i]<0){if(r>t1)return null;if(r>t0)t0=r;}else{if(r<t0)return null;if(r<t1)t1=r;}}}
return[[p[0]+t0*dx,p[1]+t0*dy],[p[0]+t1*dx,p[1]+t1*dy]];}
function L(p,q,M){var c=clip(p,q);if(!c)return;var l=document.createElementNS(NS,"line");l.setAttribute("x1",c[0][0]);l.setAttribute("y1",c[0][1]);l.setAttribute("x2",c[1][0]);l.setAttribute("y2",c[1][1]);l.setAttribute("stroke",M?"#a4a4a4":"#565656");l.setAttribute("stroke-width",M?3:2.2);g.appendChild(l);}
for(var pass=0;pass<2;pass++){for(var i=-20;i<=20;i++){var M=i%5===0;if(M!==(pass===1))continue;L(H(-20,i),H(20,i),M);L(H(i,-20),H(i,20),M);}}
function smooth(p){var n=p.length,s="";function m(i,j){return((p[i][0]+p[j][0])/2)+" "+((p[i][1]+p[j][1])/2);}s="M"+m(n-1,0);for(var i=0;i<n;i++){s+="Q"+p[i][0]+" "+p[i][1]+" "+m(i,(i+1)%n);}return s+"Z";}
var outer=[[383,270],[392,195],[440,115],[510,75],[640,52],[760,80],[880,140],[1000,240],[1100,370],[1155,510],[1162,610],[1125,710],[1050,785],[930,792],[790,750],[640,670],[510,550],[425,420]];
var wall=[[432,300],[445,215],[490,170],[570,160],[680,175],[800,240],[920,340],[1010,460],[1060,570],[1062,650],[1030,705],[960,725],[850,712],[720,640],[610,560],[510,450],[455,380]];
var hole=[[478,300],[480,220],[510,175],[570,165],[680,178],[800,240],[920,340],[1010,460],[1058,570],[1055,655],[1030,690],[960,700],[860,690],[760,650],[640,570],[540,470],[490,370]];
document.getElementById("rOuter").setAttribute("d",smooth(outer)+smooth(wall));
document.getElementById("rWall").setAttribute("d",smooth(wall)+smooth(hole));
})();
</script>
</body></html>
